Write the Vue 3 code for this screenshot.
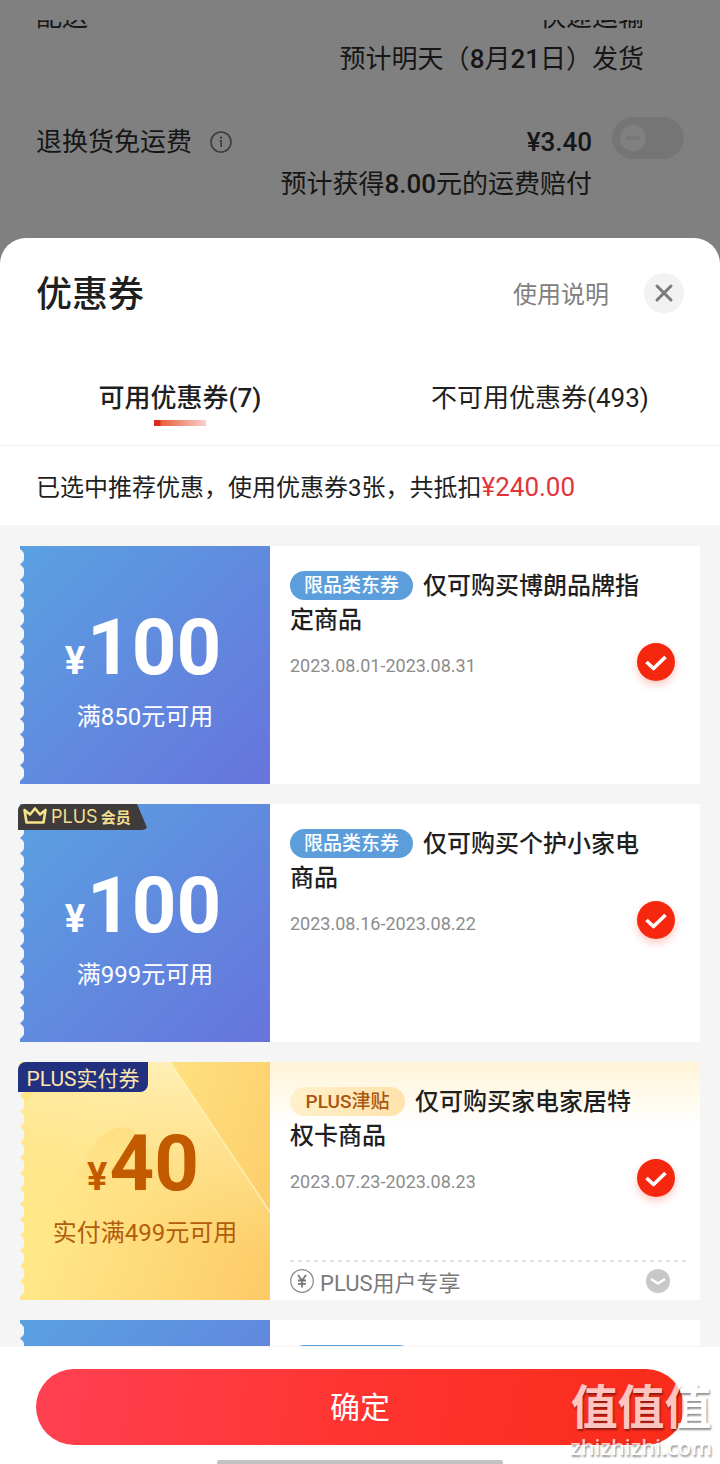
<script setup>
import { ref } from 'vue'

const activeTab = ref('usable')
const returnShipping = ref(false)

const tabs = [
  { id: 'usable', label: '可用优惠券(7)' },
  { id: 'unusable', label: '不可用优惠券(493)' },
]

const coupons = ref([
  {
    id: 1,
    theme: 'blue',
    amount: '100',
    condition: '满850元可用',
    chip: '限品类东券',
    title: '仅可购买博朗品牌指定商品',
    period: '2023.08.01-2023.08.31',
    checked: true,
  },
  {
    id: 2,
    theme: 'blue',
    badge: 'member',
    amount: '100',
    condition: '满999元可用',
    chip: '限品类东券',
    title: '仅可购买个护小家电商品',
    period: '2023.08.16-2023.08.22',
    checked: true,
  },
  {
    id: 3,
    theme: 'gold',
    badge: 'paid',
    amount: '40',
    condition: '实付满499元可用',
    chip: 'PLUS津贴',
    title: '仅可购买家电家居特权卡商品',
    period: '2023.07.23-2023.08.23',
    note: 'PLUS用户专享',
    checked: true,
  },
  { id: 4, theme: 'blue' },
])
</script>

<template>
  <div class="page">
    <section class="order">
      <div class="order-row delivery">
        <span>配送</span>
        <p class="order-value">快递运输<br />预计明天（<b>8</b>月<b>21</b>日）发货</p>
      </div>
      <div class="order-row shipping">
        <label class="order-label" for="return-shipping">
          退换货免运费
          <svg class="info" viewBox="0 0 24 24" aria-hidden="true">
            <circle cx="12" cy="12" r="10" fill="none" stroke="#3c3c3c" stroke-width="1.6" />
            <circle cx="12" cy="7.6" r="1.2" fill="#3c3c3c" />
            <path d="M10.6 10.8H12.2V17" fill="none" stroke="#3c3c3c" stroke-width="1.6" />
          </svg>
        </label>
        <p class="order-value"><b>¥3.40</b><br />预计获得<b>8.00</b>元的运费赔付</p>
        <input id="return-shipping" v-model="returnShipping" class="toggle" type="checkbox" role="switch" />
      </div>
    </section>

    <main class="sheet">
      <header class="sheet-head">
        <h1>优惠券</h1>
        <a class="help" href="#">使用说明</a>
        <button class="close" type="button" aria-label="关闭">
          <svg viewBox="0 0 40 40" aria-hidden="true">
            <path d="M13 13L27 27M27 13L13 27" fill="none" stroke="#7a7a7a" stroke-width="3" stroke-linecap="round" />
          </svg>
        </button>
      </header>

      <nav class="tabs">
        <button
          v-for="tab in tabs"
          :key="tab.id"
          type="button"
          class="tab"
          :class="{ active: activeTab === tab.id }"
          @click="activeTab = tab.id"
        >
          {{ tab.label }}
        </button>
      </nav>

      <p class="summary">已选中推荐优惠，使用优惠券3张，共抵扣<span class="saving">¥240.00</span></p>

      <div class="list">
        <article v-for="c in coupons" :key="c.id" class="coupon" :class="c.theme">
          <div class="value">
            <svg v-if="c.theme === 'gold'" class="shine" viewBox="0 0 250 238" preserveAspectRatio="none" aria-hidden="true">
              <defs>
                <linearGradient id="beam" x1="0.7" y1="0" x2="0.5" y2="1">
                  <stop offset="0" stop-color="#fff0b8" />
                  <stop offset="0.75" stop-color="#ffe38c" stop-opacity="0" />
                </linearGradient>
                <linearGradient id="peak" x1="0.5" y1="0" x2="0.5" y2="1">
                  <stop offset="0" stop-color="#ffdf82" />
                  <stop offset="1" stop-color="#ffdf82" stop-opacity="0" />
                </linearGradient>
              </defs>
              <path d="M35 0H150L250 150V238H0V50Z" fill="url(#beam)" />
              <path d="M80 75Q110 52 126 84L177 150H30Z" fill="url(#peak)" />
              <path d="M150 0L250 150" stroke="#fff0b4" stroke-width="1.5" />
            </svg>
            <template v-if="c.amount">
              <p class="amount"><span class="yen">¥</span>{{ c.amount }}</p>
              <p class="condition">{{ c.condition }}</p>
            </template>
            <span v-if="c.badge === 'member'" class="badge member">
              <svg viewBox="0 0 26 20" aria-hidden="true">
                <path d="M2.500 4L8 8.500L13 2.500L18 8.500L23.500 4L21.500 16.500H4.500Z" fill="none" stroke="#f6e48a" stroke-width="2.600" stroke-linejoin="round" />
              </svg>
              PLUS<b>会员</b>
            </span>
            <span v-if="c.badge === 'paid'" class="badge paid">PLUS实付券</span>
          </div>

          <div class="detail">
            <h2><span class="chip">{{ c.chip }}</span>{{ c.title }}</h2>
            <div v-if="c.period" class="pick">
              <time>{{ c.period }}</time>
              <span class="check">
                <input v-model="c.checked" type="checkbox" :aria-label="c.title" />
                <svg v-if="c.checked" viewBox="0 0 38 38" aria-hidden="true">
                  <path d="M9.500 19L16.500 25.500L28.500 14" fill="none" stroke="#fff" stroke-width="3.600" stroke-linejoin="round" />
                </svg>
              </span>
            </div>
            <div v-if="c.note" class="note">
              <svg viewBox="0 0 24 24" aria-hidden="true">
                <circle cx="12" cy="12" r="11.300" fill="none" stroke="#888" stroke-width="1.200" />
                <path d="M8 6L12 11.500L16 6M12 11.500V18.500M8 11.500H16M8 14.800H16" fill="none" stroke="#777" stroke-width="1.800" />
              </svg>
              <span>{{ c.note }}</span>
              <button type="button" class="expand" aria-label="展开">
                <svg viewBox="0 0 24 24" aria-hidden="true">
                  <circle cx="12" cy="12" r="12" fill="#c8c8c8" />
                  <path d="M5 10L12 14.500L19 10" fill="none" stroke="#fff" stroke-width="2.600" stroke-linejoin="round" />
                </svg>
              </button>
            </div>
          </div>
        </article>
      </div>

      <footer class="foot">
        <button class="confirm" type="button">确定</button>
        <div class="home-bar"></div>
      </footer>
    </main>

    <div class="watermark">
      <span class="mark">值值值</span>
      <span class="site">zhizhizhi.com</span>
    </div>
  </div>
</template>

<style>
body {
  margin: 0;
}
</style>

<style scoped>
* {
  box-sizing: border-box;
}
.page {
  position: relative;
  display: flex;
  flex-direction: column;
  height: 100vh;
  overflow: hidden;
  background: #808080;
  color: #1f1f1f;
  font-family: Roboto, "Noto Sans CJK SC", sans-serif;
}
p,
h1,
h2 {
  margin: 0;
  font-weight: 400;
}
button {
  padding: 0;
  border: 0;
  background: none;
  color: inherit;
  font: inherit;
}
svg {
  display: block;
}

.order {
  flex: none;
  margin-top: 20px;
  padding: 0 36px 33px;
  overflow: hidden;
  color: #161616;
  font-size: 26px;
  line-height: 42px;
}
.order-row {
  display: flex;
  align-items: flex-start;
}
.order b {
  font-weight: 500;
}
.order-value {
  margin-left: auto;
  text-align: right;
}
.delivery {
  margin-top: -24px;
  padding-right: 40px;
}
.shipping {
  margin-top: 37px;
}
.shipping .order-label,
.shipping .order-value {
  padding-top: 4px;
}
.order-label {
  display: flex;
  align-items: center;
  gap: 17px;
}
.info {
  width: 24px;
  height: 24px;
}
.toggle {
  position: relative;
  width: 72px;
  height: 42px;
  margin: 0 0 0 20px;
  appearance: none;
  border-radius: 21px;
  background: #757575;
}
.toggle::before {
  content: "";
  position: absolute;
  top: 8px;
  left: 8px;
  width: 26px;
  height: 26px;
  border-radius: 50%;
  background: linear-gradient(#787878, #787878) center / 14px 4px no-repeat #808080;
}
.toggle:checked::before {
  left: 38px;
}

.sheet {
  flex: 1;
  display: flex;
  flex-direction: column;
  min-height: 0;
  border-radius: 26px 26px 0 0;
  background: #fff;
  overflow: hidden;
}
.sheet-head {
  display: flex;
  align-items: flex-start;
  padding: 35px 36px 0;
  line-height: 40px;
}
.sheet-head h1,
.help {
  padding-top: 2px;
}
.sheet-head h1 {
  font-size: 36px;
  font-weight: 500;
}
.help {
  margin-left: auto;
  color: #808080;
  font-size: 24px;
  text-decoration: none;
}
.close {
  width: 40px;
  height: 40px;
  margin-left: 35px;
  border-radius: 50%;
  background: #f2f2f2;
}
.tabs {
  display: grid;
  grid-template-columns: 1fr 1fr;
  margin-top: 63px;
  padding-bottom: 19px;
  border-bottom: 1px solid #f0f0f0;
}
.tab {
  display: flex;
  flex-direction: column;
  align-items: center;
  gap: 2px;
  font-size: 26px;
  line-height: 40px;
}
.tab::after {
  content: "";
  width: 52px;
  height: 6px;
}
.tab.active {
  font-weight: 500;
}
.tab.active::after {
  background: linear-gradient(90deg, #dc2a20 6px, #e8603c 7px, #fbd0cc);
}
.summary {
  padding: 22px 36px 17px;
  font-size: 24px;
  line-height: 40px;
}
.saving {
  color: #e1353c;
  font-size: 26px;
  line-height: 30px;
}

.list {
  flex: 1;
  display: flex;
  flex-direction: column;
  gap: 20px;
  min-height: 0;
  padding: 21px 20px 0;
  background: #f5f5f5;
  overflow: hidden;
}
.coupon {
  flex: none;
  display: flex;
  min-height: 238px;
}
.value {
  position: relative;
  flex: none;
  width: 250px;
  padding-top: 62px;
  color: #fff;
  text-align: center;
}
.value::before {
  content: "";
  position: absolute;
  top: 3px;
  bottom: 3px;
  left: 0;
  z-index: 1;
  width: 4px;
  background: radial-gradient(circle at -4px 50%, #f5f5f5 8px, transparent 9px) 0 0 / 4px 16px;
  background-repeat: no-repeat round;
}
.blue .value {
  background: linear-gradient(135deg, #5aa1e1, #6774dc);
}
.gold .value {
  background: linear-gradient(110deg, #ffe687 30%, #fdca66);
  color: #c25a00;
}
.shine {
  position: absolute;
  inset: 0;
  width: 100%;
  height: 100%;
}
.amount {
  position: relative;
  padding-right: 4px;
  font-size: 78px;
  font-weight: 700;
  line-height: 80px;
}
.yen {
  margin-right: 2px;
  font-size: 38px;
  line-height: 36px;
}
.condition {
  position: relative;
  margin-top: 14px;
  font-size: 24px;
  line-height: 30px;
}
.gold .condition {
  color: #b25c0c;
}
.badge {
  position: absolute;
  top: 0;
  left: -2px;
  z-index: 2;
  display: flex;
  align-items: center;
  width: 130px;
  white-space: nowrap;
}
.badge.member {
  gap: 3px;
  height: 26px;
  padding: 0 0 2px 4px;
  border-radius: 6px 0 6px 0;
  clip-path: polygon(0 0, 119px 0, 100% 100%, 0 100%);
  background: #3f3b3b;
  color: #f3df8e;
  font-family: Inter, "Noto Sans CJK SC", sans-serif;
  font-size: 18px;
}
.badge.member svg {
  width: 26px;
  height: 20px;
}
.badge.member b {
  font-size: 15px;
}
.badge.paid {
  justify-content: center;
  height: 30px;
  border-radius: 8px 0;
  background: #22317f;
  color: #fde5ac;
  font-size: 21px;
}

.detail {
  flex: 1;
  display: flex;
  flex-direction: column;
  padding: 23px 0 0 20px;
  background: #fff;
}
.gold .detail {
  background: linear-gradient(#fff4d6, #fff 64px);
}
.detail h2 {
  padding-right: 50px;
  font-size: 24px;
  font-weight: 500;
  line-height: 34px;
}
.chip {
  display: inline-block;
  min-width: 115px;
  height: 29px;
  margin: 2px 10px 0 0;
  padding: 0 12px;
  border-radius: 15px;
  vertical-align: top;
  font-size: 19px;
  line-height: 29px;
  text-align: center;
}
.blue .chip {
  min-width: 123px;
  background: #5c9edc;
  color: #fff;
}
.gold .chip {
  background: linear-gradient(90deg, #fff0cb, #ffe2ab);
  color: #a9560f;
}
.pick {
  display: flex;
  align-items: flex-end;
  justify-content: space-between;
  margin-top: 6px;
  padding-right: 25px;
}
time {
  color: #8c8c8c;
  font-size: 18px;
  line-height: 30px;
}
.check {
  position: relative;
  width: 38px;
  height: 38px;
}
.check input {
  display: block;
  width: 100%;
  height: 100%;
  margin: 0;
  appearance: none;
  border: 2px solid #ccc;
  border-radius: 50%;
}
.check input:checked {
  border: 0;
  background: #f5270f;
  box-shadow: 0 4px 8px rgba(245, 39, 15, 0.25);
}
.check svg {
  position: absolute;
  inset: 0;
  pointer-events: none;
}
.note {
  display: flex;
  align-items: center;
  gap: 6px;
  height: 40px;
  margin: auto 13px 0 0;
  padding: 2px 17px 0 0;
  background: repeating-linear-gradient(90deg, #e2e2e2 0 4px, transparent 4px 8px) top / 100% 2px no-repeat;
  color: #7a7a7a;
  font-size: 22px;
}
.note svg {
  width: 24px;
  height: 24px;
}
.expand {
  margin-left: auto;
}

.foot {
  flex: none;
  display: flex;
  flex-direction: column;
  align-items: center;
  gap: 15px;
  padding: 22px 36px 0;
  border-top: 1px solid #f5f5f5;
}
.confirm {
  width: 100%;
  height: 76px;
  padding-bottom: 4px;
  border-radius: 38px;
  background: linear-gradient(100deg, #ff4153, #ff3430 50%, #f92b18);
  color: #fff;
  font-size: 30px;
}
.home-bar {
  width: 44%;
  height: 4px;
  border-radius: 2px 2px 0 0;
  background: #c2c2c2;
}

.watermark {
  position: absolute;
  right: 8px;
  bottom: 4px;
  display: flex;
  flex-direction: column;
  align-items: center;
  color: #fff;
  opacity: 0.72;
  text-shadow: 1px 2px 2px rgba(0, 0, 0, 0.6);
  pointer-events: none;
}
.mark {
  font-size: 47px;
  font-weight: 700;
  line-height: 48px;
}
.site {
  font-family: "Noto Sans", sans-serif;
  font-size: 22px;
  font-weight: 500;
  line-height: 28px;
}
</style>
